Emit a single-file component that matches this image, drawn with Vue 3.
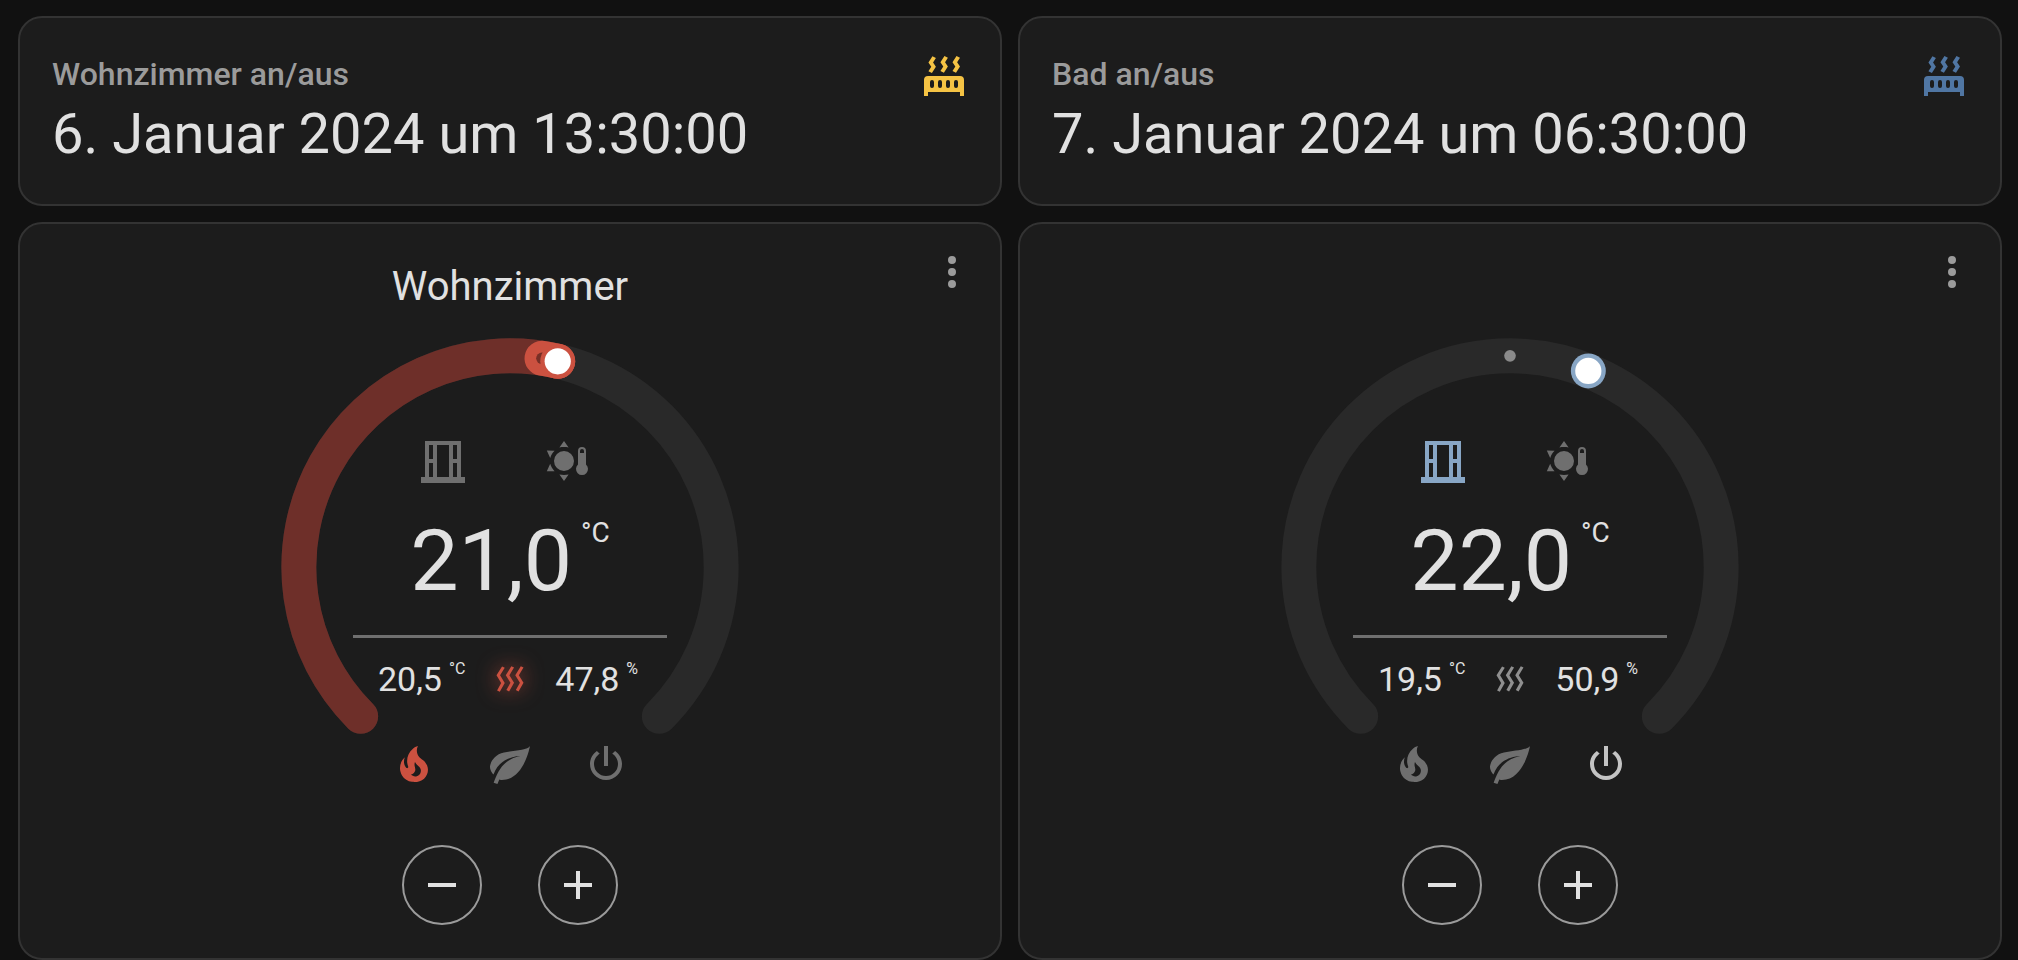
<template>
  <main class="dashboard">
    <section v-for="room in rooms" :key="room.id" class="column">
      <article class="card entity-card">
        <div class="entity-header">
          <span class="entity-name">{{ room.label }}</span>
          <svg class="icon" :class="room.switchedOn ? 'radiator-on' : 'radiator-off'" viewBox="0 0 24 24" aria-hidden="true">
            <path :d="icons.radiator" />
          </svg>
        </div>
        <div class="entity-value">{{ room.changed }}</div>
      </article>

      <article class="card thermostat-card">
        <button class="more-button" type="button" aria-label="Mehr Informationen">
          <svg class="icon" viewBox="0 0 24 24"><path :d="icons.dots" /></svg>
        </button>
        <h2 class="title">{{ room.title }}</h2>

        <div class="dial">
          <svg class="ring" viewBox="0 0 320 320" aria-hidden="true">
            <path class="track" :d="arc(MIN, MAX)" />
            <template v-if="room.mode === 'heat'">
              <path class="range" :d="arc(MIN, room.target)" />
              <path class="range-active" :d="arc(room.current, room.target)" />
            </template>
            <path class="current" :class="{ heating: room.mode === 'heat' }" :d="arc(room.current, room.current)" />
            <path class="knob-border" :class="{ heating: room.mode === 'heat' }" :d="arc(room.target, room.target)" />
            <path class="knob" :d="arc(room.target, room.target)" />
          </svg>

          <div class="dial-content">
            <div class="states">
              <svg class="icon" :class="{ open: room.windowOpen }" viewBox="0 0 24 24" aria-hidden="true">
                <path :d="icons.window" />
              </svg>
              <svg class="icon" viewBox="0 0 24 24" aria-hidden="true">
                <path fill-rule="evenodd" :d="icons.sunThermometer" />
              </svg>
            </div>

            <div class="target">
              <span>{{ format(room.target) }}</span>
              <span class="target-unit">°C</span>
            </div>

            <div class="divider"></div>

            <div class="readings">
              <div class="reading">
                <span>{{ format(room.current) }}</span>
                <span class="reading-unit">°C</span>
              </div>
              <svg class="heat-icon" :class="{ heating: room.mode === 'heat' }" viewBox="0 0 24 24" aria-hidden="true">
                <path :d="icons.heatWave" />
              </svg>
              <div class="reading">
                <span>{{ format(room.humidity) }}</span>
                <span class="reading-unit">%</span>
              </div>
            </div>

            <div class="modes">
              <button
                v-for="mode in modes"
                :key="mode.id"
                type="button"
                class="mode-button"
                :class="[mode.id, { active: room.mode === mode.id }]"
                :aria-label="mode.label"
                :aria-pressed="room.mode === mode.id"
                @click="room.mode = mode.id"
              >
                <svg class="icon" viewBox="0 0 24 24"><path :d="icons[mode.id]" /></svg>
              </button>
            </div>
          </div>
        </div>

        <div class="steppers">
          <button type="button" class="step-button" aria-label="Temperatur senken" @click="step(room, -0.5)">
            <svg class="icon" viewBox="0 0 24 24"><path :d="icons.minus" /></svg>
          </button>
          <button type="button" class="step-button" aria-label="Temperatur erhöhen" @click="step(room, 0.5)">
            <svg class="icon" viewBox="0 0 24 24"><path :d="icons.plus" /></svg>
          </button>
        </div>
      </article>
    </section>
  </main>
</template>

<script setup>
import { ref } from 'vue';

const MIN = 4;
const MAX = 35;
const RADIUS = 145;

const rooms = ref([
  {
    id: 'wohnzimmer',
    label: 'Wohnzimmer an/aus',
    changed: '6. Januar 2024 um 13:30:00',
    switchedOn: true,
    title: 'Wohnzimmer',
    target: 21,
    current: 20.5,
    humidity: 47.8,
    windowOpen: false,
    mode: 'heat'
  },
  {
    id: 'bad',
    label: 'Bad an/aus',
    changed: '7. Januar 2024 um 06:30:00',
    switchedOn: false,
    title: '',
    target: 22,
    current: 19.5,
    humidity: 50.9,
    windowOpen: true,
    mode: 'off'
  }
]);

const modes = [
  { id: 'heat', label: 'Heizen' },
  { id: 'eco', label: 'Eco' },
  { id: 'off', label: 'Aus' }
];

const icons = {
  radiator:
    'M7.95,3L6.53,5.19L7.95,7.4H7.94L5.95,10.5L4.22,9.6L5.64,7.39L4.22,5.19L6.22,2.09L7.95,3M13.95,2.89L12.53,5.1L13.95,7.3L13.94,7.31L11.95,10.4L10.22,9.5L11.64,7.3L10.22,5.1L12.22,2L13.95,2.89M20,2.89L18.56,5.1L20,7.3V7.31L18,10.4L16.25,9.5L17.67,7.3L16.25,5.1L18.25,2L20,2.89M2,22V14A2,2 0 0,1 4,12H20A2,2 0 0,1 22,14V22H20V20H4V22H2M6,14A1,1 0 0,0 5,15V17A1,1 0 0,0 6,18A1,1 0 0,0 7,17V15A1,1 0 0,0 6,14M10,14A1,1 0 0,0 9,15V17A1,1 0 0,0 10,18A1,1 0 0,0 11,17V15A1,1 0 0,0 10,14M14,14A1,1 0 0,0 13,15V17A1,1 0 0,0 14,18A1,1 0 0,0 15,17V15A1,1 0 0,0 14,14M18,14A1,1 0 0,0 17,15V17A1,1 0 0,0 18,18A1,1 0 0,0 19,17V15A1,1 0 0,0 18,14Z',
  dots:
    'M12,16A2,2 0 0,1 14,18A2,2 0 0,1 12,20A2,2 0 0,1 10,18A2,2 0 0,1 12,16M12,10A2,2 0 0,1 14,12A2,2 0 0,1 12,14A2,2 0 0,1 10,12A2,2 0 0,1 12,10M12,4A2,2 0 0,1 14,6A2,2 0 0,1 12,8A2,2 0 0,1 10,6A2,2 0 0,1 12,4Z',
  window: 'M21 20V2H3V20H1V23H23V20M19 4V11H17V4M5 4H7V11H5M5 20V13H7V20M9 20V4H15V20M17 20V13H19V20Z',
  sunThermometer:
    'M10,7A5,5 0 0,1 15,12A5,5 0 0,1 10,17A5,5 0 0,1 5,12A5,5 0 0,1 10,7M10,2L12.3,5.2C10.8,4.9 9.2,4.9 7.7,5.2L10,2M10,22L7.7,18.8C9.2,19.1 10.8,19.1 12.3,18.8L10,22M1.4,6.8L5.3,6.9C4.3,7.9 3.5,9.1 3.1,10.5L1.4,6.8M1.4,17.1L3.1,13.4C3.5,14.8 4.3,16.1 5.3,17.1L1.4,17.1M21,13.8V7A2,2 0 0,0 17,7V13.8A3,3 0 1,0 21,13.8M19,6A1,1 0 0,1 20,7V8H18V7A1,1 0 0,1 19,6Z',
  heatWave:
    'M8.5 4.5L5.4 9.5L8.5 14.7L5.2 20.5L3.4 19.6L6.1 14.7L3 9.5L6.7 3.6L8.5 4.5M14.7 4.4L11.6 9.5L14.7 14.5L11.4 20.3L9.6 19.4L12.3 14.5L9.2 9.5L12.9 3.5L14.7 4.4M21 4.4L17.9 9.5L21 14.5L17.7 20.3L15.9 19.4L18.6 14.5L15.5 9.5L19.2 3.5L21 4.4',
  heat:
    'M17.66 11.2C17.43 10.9 17.15 10.64 16.89 10.38C16.22 9.78 15.46 9.35 14.82 8.72C13.33 7.26 13 4.85 13.95 3C13 3.23 12.17 3.75 11.46 4.32C8.87 6.4 7.85 10.07 9.07 13.22C9.11 13.32 9.15 13.42 9.15 13.55C9.15 13.77 9 13.97 8.8 14.05C8.57 14.15 8.33 14.09 8.14 13.93C8.08 13.88 8.04 13.83 8 13.76C6.87 12.33 6.69 10.28 7.45 8.64C5.78 10 4.87 12.3 5 14.47C5.06 14.97 5.12 15.47 5.29 15.97C5.43 16.57 5.7 17.17 6 17.7C7.08 19.43 8.95 20.67 10.96 20.92C13.1 21.19 15.39 20.8 17.03 19.32C18.86 17.66 19.5 15 18.56 12.72L18.43 12.46C18.22 12 17.66 11.2 17.66 11.2M14.5 17.5C14.22 17.74 13.76 18 13.4 18.1C12.28 18.5 11.16 17.94 10.5 17.28C11.69 17 12.4 16.12 12.61 15.23C12.78 14.43 12.46 13.77 12.33 13C12.21 12.26 12.23 11.63 12.5 10.94C12.69 11.32 12.89 11.7 13.13 12C13.9 13 15.11 13.44 15.37 14.8C15.41 14.94 15.43 15.08 15.43 15.23C15.46 16.05 15.1 16.95 14.5 17.5Z',
  eco: 'M17,8C8,10 5.9,16.17 3.82,21.34L5.71,22L6.66,19.7C7.14,19.87 7.64,20 8,20C19,20 22,3 22,3C21,5 14,5.25 9,6.25C4,7.25 2,11.5 2,13.5C2,15.5 3.75,17.25 3.75,17.25C7,8 17,8 17,8Z',
  off: 'M16.56,5.44L15.11,6.89C16.84,7.94 18,9.83 18,12A6,6 0 0,1 12,18A6,6 0 0,1 6,12C6,9.83 7.16,7.94 8.88,6.88L7.44,5.44C5.36,6.88 4,9.28 4,12A8,8 0 0,0 12,20A8,8 0 0,0 20,12C20,9.28 18.64,6.88 16.56,5.44M13,3H11V13H13',
  minus: 'M19,13H5V11H19V13Z',
  plus: 'M19,13H13V19H11V13H5V11H11V5H13V11H19V13Z'
};

// The ring covers 270 degrees and starts at the lower left
const toAngle = (value) => 135 + ((value - MIN) / (MAX - MIN)) * 270;

const toPoint = (angle) => {
  const rad = (angle * Math.PI) / 180;
  return `${160 + RADIUS * Math.cos(rad)} ${160 + RADIUS * Math.sin(rad)}`;
};

const arc = (from, to) => {
  const start = toAngle(from);
  const end = toAngle(to);
  // equal values give a round dot
  if (start === end) {
    return `M${toPoint(start)}h0`;
  }
  const large = Math.abs(end - start) > 180 ? 1 : 0;
  const sweep = end > start ? 1 : 0;
  return `M${toPoint(start)}A${RADIUS} ${RADIUS} 0 ${large} ${sweep} ${toPoint(end)}`;
};

const format = (value) => value.toFixed(1).replace('.', ',');

const step = (room, amount) => {
  room.target = Math.min(MAX, Math.max(MIN, room.target + amount));
};
</script>

<style>
body {
  margin: 0;
  background-color: #111111;
}
</style>

<style scoped>
.dashboard {
  display: grid;
  grid-template-columns: 1fr 1fr;
  gap: 16px;
  padding: 16px 16px 0 18px;
  font-family: Roboto, sans-serif;
  color: #e1e1e1;
}

.column {
  display: flex;
  flex-direction: column;
  gap: 16px;
  min-width: 0;
}

.card {
  position: relative;
  box-sizing: border-box;
  background-color: #1c1c1c;
  border: 2px solid #333333;
  border-radius: 24px;
}

.icon {
  display: block;
  width: 48px;
  height: 48px;
  fill: currentColor;
}

button {
  padding: 0;
  border: none;
  background: none;
  color: inherit;
  cursor: pointer;
}

.entity-card {
  padding: 34px 32px 38px;
}

.entity-header {
  display: flex;
  justify-content: space-between;
  margin-bottom: 2px;
}

.entity-name {
  font-size: 32px;
  font-weight: 500;
  line-height: 44px;
  color: #9b9b9b;
}

.entity-value {
  font-size: 56px;
  line-height: 64px;
}

.radiator-on {
  color: #f5c344;
}

.radiator-off {
  color: #5076a3;
}

.thermostat-card {
  display: flex;
  flex-direction: column;
  align-items: center;
  padding: 39px 32px 33px;
}

.more-button {
  position: absolute;
  top: 24px;
  right: 24px;
  color: #9b9b9b;
}

.title {
  min-height: 48px;
  margin: 0 0 23px;
  font-size: 40px;
  font-weight: 400;
  line-height: 48px;
}

.dial {
  display: grid;
  width: 466px;
}

.ring,
.dial-content {
  grid-area: 1 / 1;
}

.ring {
  display: block;
  width: 100%;
}

.ring path {
  fill: none;
  stroke-linecap: round;
  stroke-width: 24px;
}

.ring .track {
  stroke: #292929;
}

.ring .range {
  stroke: #6e2f29;
}

.ring .range-active {
  stroke: #cb5140;
}

.ring .current {
  stroke: #8a8a8a;
  stroke-width: 8px;
}

.ring .current.heating {
  stroke: #772f26;
}

.ring .knob-border {
  stroke: #88a6c5;
}

.ring .knob-border.heating {
  stroke: #cb5140;
}

.ring .knob {
  stroke: #ffffff;
  stroke-width: 18px;
}

.dial-content {
  position: relative;
  display: flex;
  flex-direction: column;
  align-items: center;
  padding-top: 103px;
}

.states {
  display: flex;
  gap: 77px;
  padding-right: 9px;
  color: #6f6f6f;
}

.states .open {
  color: #88a6c5;
}

.target {
  display: flex;
  gap: 9px;
  margin-top: 30px;
  font-size: 86px;
  line-height: 92px;
}

.target-unit {
  margin-top: 4px;
  font-size: 28px;
  line-height: 28px;
}

.divider {
  width: 314px;
  height: 3px;
  margin: 28px 0 23px;
  background-color: #6f6f6f;
}

.readings {
  display: flex;
  gap: 27px;
  padding-right: 4px;
  font-size: 34px;
  line-height: 36px;
}

.reading {
  display: flex;
  gap: 7px;
}

.reading-unit {
  font-size: 16px;
  line-height: 16px;
}

.heat-icon {
  width: 36px;
  height: 36px;
  fill: #8f8f8f;
}

.heat-icon.heating {
  fill: #cb5140;
  filter: drop-shadow(0 0 10px #cb5140);
}

.modes {
  display: flex;
  gap: 48px;
  margin-top: 43px;
}

.mode-button {
  color: #6f6f6f;
}

.mode-button.heat.active {
  color: #cb5140;
}

.mode-button.eco.active {
  color: #6fae5c;
}

.mode-button.off.active {
  color: #c3c3c3;
}

.steppers {
  display: flex;
  gap: 56px;
  margin-top: 45px;
}

.step-button {
  display: flex;
  align-items: center;
  justify-content: center;
  box-sizing: border-box;
  width: 80px;
  height: 80px;
  border: 2px solid #9b9b9b;
  border-radius: 50%;
}
</style>
